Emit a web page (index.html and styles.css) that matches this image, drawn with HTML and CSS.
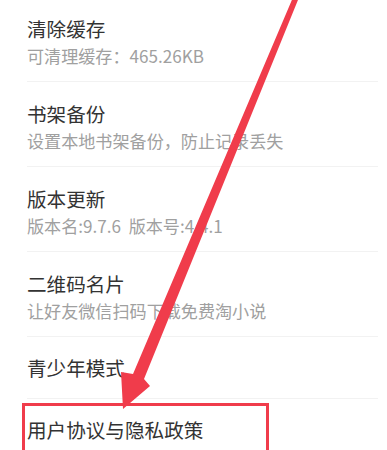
FILE: index.html
```html
<!DOCTYPE html>
<html lang="zh-CN">
<head>
<meta charset="utf-8">
<link rel="stylesheet" href="styles.css">
</head>
<body>
<div class="page">
  <ul class="list">
    <li class="row two">
      <div class="title">清除缓存</div>
      <div class="sub">可清理缓存：465.26KB</div>
    </li>
    <li class="row two">
      <div class="title">书架备份</div>
      <div class="sub">设置本地书架备份，防止记录丢失</div>
    </li>
    <li class="row two">
      <div class="title">版本更新</div>
      <div class="sub">版本名:9.7.6&nbsp;&nbsp;版本号:4.4.1</div>
    </li>
    <li class="row two">
      <div class="title">二维码名片</div>
      <div class="sub">让好友微信扫码下载免费淘小说</div>
    </li>
    <li class="row one">
      <div class="title">青少年模式</div>
    </li>
    <li class="row one">
      <div class="title">用户协议与隐私政策</div>
    </li>
  </ul>
  <svg class="overlay" width="387" height="450" viewBox="0 0 387 450" xmlns="http://www.w3.org/2000/svg">
    <rect x="23.5" y="404.5" width="244" height="80" fill="none" stroke="#f03c4b" stroke-width="3"/>
    <polygon points="294,-5 300,-5 144,379 150,386 123,409 121,372 133,374" fill="#f03c4b"/>
  </svg>
</div>
</body>
</html>
```

FILE: styles.css
```css
html, body {
  margin: 0;
  padding: 0;
  background: #ffffff;
}
.page {
  position: relative;
  width: 387px;
  height: 450px;
  overflow: hidden;
  font-family: "Noto Sans CJK SC", "Noto Sans", sans-serif;
}
.list {
  list-style: none;
  margin: -3px 0 0 0;
  padding: 0 9px 0 27px;
}
.row {
  border-bottom: 1px solid #f2f2f2;
  box-sizing: border-box;
}
.row.two {
  height: 85px;
  padding-top: 18px;
}
.row.one {
  height: 62px;
  padding-top: 17px;
}
.title {
  font-size: 19.6px;
  line-height: 28px;
  color: #333333;
}
.sub {
  font-size: 17.1px;
  line-height: 25px;
  color: #a0a0a0;
}
.overlay {
  position: absolute;
  left: 0;
  top: 0;
}
```
